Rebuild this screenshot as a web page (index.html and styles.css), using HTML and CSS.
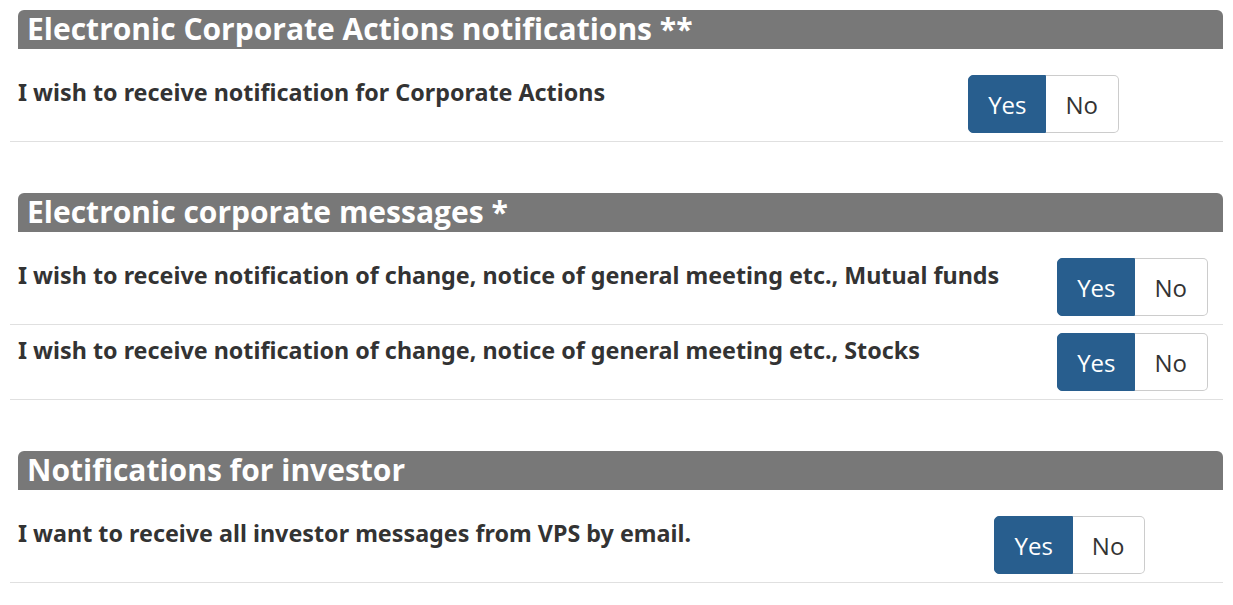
FILE: index.html
```html
<!DOCTYPE html>
<html lang="en">

<head>
    <meta charset="UTF-8">
    <meta name="viewport" content="width=device-width, initial-scale=1.0">
    <title>Notification settings</title>
    <link rel="stylesheet" href="styles.css">
</head>

<body>
    <div class="container">
        <h2 class="section-title">Electronic Corporate Actions notifications **</h2>
        <table class="settings">
            <tr>
                <td class="label">I wish to receive notification for Corporate Actions</td>
                <td class="choice">
                    <div class="btn-group">
                        <button type="button" class="btn active">Yes</button>
                        <button type="button" class="btn">No</button>
                    </div>
                </td>
            </tr>
        </table>

        <h2 class="section-title">Electronic corporate messages *</h2>
        <table class="settings">
            <tr>
                <td class="label">I wish to receive notification of change, notice of general meeting etc., Mutual funds</td>
                <td class="choice">
                    <div class="btn-group">
                        <button type="button" class="btn active">Yes</button>
                        <button type="button" class="btn">No</button>
                    </div>
                </td>
            </tr>
            <tr>
                <td class="label">I wish to receive notification of change, notice of general meeting etc., Stocks</td>
                <td class="choice">
                    <div class="btn-group">
                        <button type="button" class="btn active">Yes</button>
                        <button type="button" class="btn">No</button>
                    </div>
                </td>
            </tr>
        </table>

        <h2 class="section-title">Notifications for investor</h2>
        <table class="settings">
            <tr>
                <td class="label">I want to receive all investor messages from VPS by email.</td>
                <td class="choice">
                    <div class="btn-group">
                        <button type="button" class="btn active">Yes</button>
                        <button type="button" class="btn">No</button>
                    </div>
                </td>
            </tr>
        </table>
    </div>
</body>

</html>
```

FILE: styles.css
```css
body {
    font-family: "Open Sans", "Liberation Sans", sans-serif;
    color: #333;
    background-color: #fff;
    margin: 0;
    padding: 0;
}

.container {
    padding: 10px 10px 0 10px;
}

.section-title {
    margin: 0 0 18px 8px;
    height: 39px;
    padding: 0 9px;
    background-color: #787878;
    color: #fff;
    font-size: 30px;
    font-weight: 700;
    line-height: 37px;
    border-radius: 6px 6px 0 0;
}

.settings {
    width: 100%;
    border-collapse: collapse;
    margin-bottom: 51px;
}

.settings td {
    padding: 8px;
    vertical-align: top;
    border-bottom: 1px solid #e0e0e0;
}

.settings .label {
    font-family: "Noto Sans", "Open Sans", sans-serif;
    font-size: 23.3px;
    font-weight: 700;
    line-height: 34px;
}

.btn-group {
    display: flex;
}

.btn {
    height: 58px;
    padding: 0 19px;
    font-family: inherit;
    font-size: 24px;
    color: #333;
    background-color: #fff;
    border: 1px solid #ccc;
    cursor: pointer;
}

.btn:first-child {
    border-radius: 5px 0 0 5px;
}

.btn:last-child {
    padding-right: 20px;
    border-left: none;
    border-radius: 0 5px 5px 0;
}

.btn.active {
    background-color: #285e8e;
    border-color: #285e8e;
    color: #fff;
}
```
